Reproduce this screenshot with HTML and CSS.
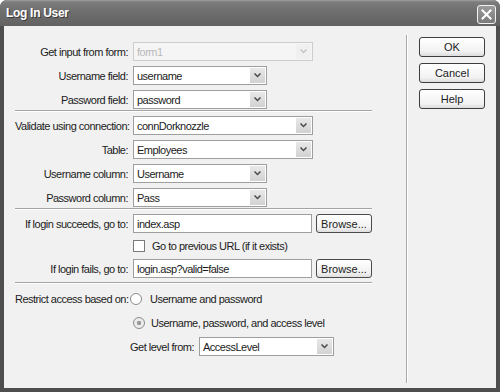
FILE: index.html
```html
<!DOCTYPE html>
<html lang="en">

<head>
    <meta charset="UTF-8">
    <meta name="viewport" content="width=device-width, initial-scale=1.0">
    <title>Log In User</title>
    <link rel="stylesheet" href="styles.css">
</head>

<body>
    <div class="dialog">
        <div class="titlebar">
            <span class="title">Log In User</span>
            <button type="button" class="close-btn" aria-label="Close">
                <svg width="11" height="11" viewBox="0 0 11 11"><path d="M1.5 1.5L9.5 9.5M9.5 1.5L1.5 9.5" stroke="#fff" stroke-width="2" stroke-linecap="square"/></svg>
            </button>
        </div>
        <div class="frame">
            <form class="main" action="#">
                <div class="group">
                    <div class="row">
                        <label class="lbl">Get input from form:</label>
                        <div class="select wide disabled"><span class="value">form1</span><span class="arrow"><svg width="7" height="5" viewBox="0 0 7 5"><path d="M0.5 0.5L3.5 3.5L6.5 0.5" fill="none" stroke="#c4c4c4" stroke-width="1.5"/></svg></span></div>
                    </div>
                    <div class="row">
                        <label class="lbl">Username field:</label>
                        <div class="select narrow"><span class="value">username</span><span class="arrow"><svg width="7" height="5" viewBox="0 0 7 5"><path d="M0.5 0.5L3.5 3.5L6.5 0.5" fill="none" stroke="#4a4a4a" stroke-width="1.5"/></svg></span></div>
                    </div>
                    <div class="row">
                        <label class="lbl">Password field:</label>
                        <div class="select narrow"><span class="value">password</span><span class="arrow"><svg width="7" height="5" viewBox="0 0 7 5"><path d="M0.5 0.5L3.5 3.5L6.5 0.5" fill="none" stroke="#4a4a4a" stroke-width="1.5"/></svg></span></div>
                    </div>
                </div>
                <div class="sep"></div>
                <div class="group">
                    <div class="row">
                        <label class="lbl">Validate using connection:</label>
                        <div class="select wide"><span class="value">connDorknozzle</span><span class="arrow"><svg width="7" height="5" viewBox="0 0 7 5"><path d="M0.5 0.5L3.5 3.5L6.5 0.5" fill="none" stroke="#4a4a4a" stroke-width="1.5"/></svg></span></div>
                    </div>
                    <div class="row">
                        <label class="lbl">Table:</label>
                        <div class="select wide"><span class="value">Employees</span><span class="arrow"><svg width="7" height="5" viewBox="0 0 7 5"><path d="M0.5 0.5L3.5 3.5L6.5 0.5" fill="none" stroke="#4a4a4a" stroke-width="1.5"/></svg></span></div>
                    </div>
                    <div class="row">
                        <label class="lbl">Username column:</label>
                        <div class="select narrow"><span class="value">Username</span><span class="arrow"><svg width="7" height="5" viewBox="0 0 7 5"><path d="M0.5 0.5L3.5 3.5L6.5 0.5" fill="none" stroke="#4a4a4a" stroke-width="1.5"/></svg></span></div>
                    </div>
                    <div class="row">
                        <label class="lbl">Password column:</label>
                        <div class="select narrow"><span class="value">Pass</span><span class="arrow"><svg width="7" height="5" viewBox="0 0 7 5"><path d="M0.5 0.5L3.5 3.5L6.5 0.5" fill="none" stroke="#4a4a4a" stroke-width="1.5"/></svg></span></div>
                    </div>
                </div>
                <div class="sep"></div>
                <div class="group">
                    <div class="row">
                        <label class="lbl" for="success">If login succeeds, go to:</label>
                        <input type="text" id="success" class="text-input" value="index.asp">
                        <button type="button" class="browse">Browse...</button>
                    </div>
                    <div class="row check-row">
                        <span class="checkbox"></span>
                        <span class="check-text">Go to previous URL (if it exists)</span>
                    </div>
                    <div class="row">
                        <label class="lbl" for="fail">If login fails, go to:</label>
                        <input type="text" id="fail" class="text-input" value="login.asp?valid=false">
                        <button type="button" class="browse">Browse...</button>
                    </div>
                </div>
                <div class="sep sep-last"></div>
                <div class="group">
                    <div class="row">
                        <label class="lbl tight">Restrict access based on:</label>
                        <span class="radio first"></span>
                        <span>Username and password</span>
                    </div>
                    <div class="row indent">
                        <span class="radio checked"></span>
                        <span>Username, password, and access level</span>
                    </div>
                    <div class="row">
                        <label class="sublabel">Get level from:</label>
                        <div class="select level"><span class="value">AccessLevel</span><span class="arrow"><svg width="7" height="5" viewBox="0 0 7 5"><path d="M0.5 0.5L3.5 3.5L6.5 0.5" fill="none" stroke="#4a4a4a" stroke-width="1.5"/></svg></span></div>
                    </div>
                </div>
            </form>
            <div class="side">
                <button type="button" class="btn">OK</button>
                <button type="button" class="btn">Cancel</button>
                <button type="button" class="btn">Help</button>
            </div>
        </div>
    </div>
</body>

</html>
```

FILE: styles.css
```css
* {
    box-sizing: border-box;
}

html,
body {
    margin: 0;
    background: #fff;
}

body {
    font-family: "Liberation Sans", Arial, sans-serif;
    font-size: 11px;
    letter-spacing: -0.5px;
    color: #1c1c1c;
}

.dialog {
    width: 500px;
    height: 392px;
    display: flex;
    flex-direction: column;
    background: #4e4e4e;
    border-radius: 7px 7px 0 0;
    overflow: hidden;
}

.titlebar {
    height: 26px;
    display: flex;
    align-items: flex-start;
    justify-content: space-between;
    padding: 0 4px 0 6px;
    background: linear-gradient(to bottom, #a0a0a0 0, #7c7c7c 2px, #6e6e6e 45%, #626262 100%);
}

.title {
    margin-top: 6px;
    font-size: 12px;
    font-weight: bold;
    letter-spacing: -0.3px;
    color: #fff;
    text-shadow: 1px 1px 0 #3c3c3c;
}

.close-btn {
    margin-top: 5px;
    width: 19px;
    height: 19px;
    padding: 0;
    display: flex;
    align-items: center;
    justify-content: center;
    border: 1px solid #f2f2f2;
    border-radius: 3px;
    background: linear-gradient(to bottom, #9c9c9c, #7a7a7a);
}

.frame {
    flex: 1;
    display: flex;
    margin: 0 4px 4px;
    background: #f1f1f1;
}

.main {
    width: 368px;
    margin: 0;
    padding: 16px 0 0 11px;
}

.row {
    display: flex;
    align-items: center;
    height: 19px;
    white-space: nowrap;
}

.row + .row {
    margin-top: 5px;
}

.lbl {
    width: 113px;
    margin-right: 5px;
    text-align: right;
    flex-shrink: 0;
}

.lbl.tight {
    width: 111px;
    margin-right: 0;
}

.sep {
    height: 2px;
    border-top: 1px solid #a4a4a4;
    border-bottom: 1px solid #fff;
    margin: 1px 0 4px;
}

.sep-last {
    margin: 4px 0 5px;
}

.select {
    display: flex;
    align-items: center;
    height: 19px;
    padding: 0 1px 0 3px;
    border: 1px solid #9e9e9e;
    background: #fff;
}

.select.wide {
    width: 180px;
}

.select.narrow {
    width: 134px;
}

.select.level {
    width: 135px;
}

.select .value {
    flex: 1;
}

.select .arrow {
    width: 15px;
    height: 15px;
    display: flex;
    align-items: center;
    justify-content: center;
    background: linear-gradient(to bottom, #e8e8e8, #d2d2d2);
}

.select.disabled {
    border-color: #cdcdcd;
    background: #f5f5f5;
}

.select.disabled .value {
    color: #b8b8b8;
}

.select.disabled .arrow {
    background: #f0f0f0;
}

.text-input {
    width: 179px;
    height: 19px;
    padding: 0 3px;
    border: 1px solid #9e9e9e;
    background: #fff;
    font: inherit;
    letter-spacing: inherit;
    color: #1c1c1c;
    outline: none;
}

.browse {
    width: 56px;
    height: 19px;
    margin-left: 4px;
    padding: 0;
    border: 1px solid #4a4a4a;
    border-radius: 3px;
    background: linear-gradient(to bottom, #ffffff, #f1f1f1 75%, #dedede);
    font: inherit;
    letter-spacing: 0;
    color: #1c1c1c;
}

.check-row {
    height: 16px;
    padding-left: 118px;
}

.checkbox {
    width: 12px;
    height: 12px;
    border: 1px solid #7a7a7a;
    background: #fff;
    margin-right: 7px;
}

.radio {
    width: 12px;
    height: 12px;
    border-radius: 50%;
    border: 1px solid #8c8c8c;
    background: #fff;
    margin-right: 6px;
}

.radio.first {
    margin-left: 4px;
    margin-right: 8px;
}

.radio.checked {
    background: radial-gradient(circle, #9a9a9a 0 2px, #ececec 2.5px);
}

.indent {
    padding-left: 118px;
}

.sublabel {
    width: 66px;
    margin-left: 113px;
    margin-right: 5px;
    text-align: right;
}

.side {
    margin: 9px 0 5px 34px;
    padding: 2px 0 0 12px;
    border-left: 1px solid #a8a8a8;
    box-shadow: inset 1px 0 0 #fff;
    display: flex;
    flex-direction: column;
    gap: 6px;
}

.btn {
    width: 66px;
    height: 20px;
    padding: 0;
    border: 1px solid #3e3e3e;
    border-radius: 3px;
    background: linear-gradient(to bottom, #ffffff, #f2f2f2 75%, #dcdcdc);
    font: inherit;
    letter-spacing: 0;
    color: #1c1c1c;
}
```
